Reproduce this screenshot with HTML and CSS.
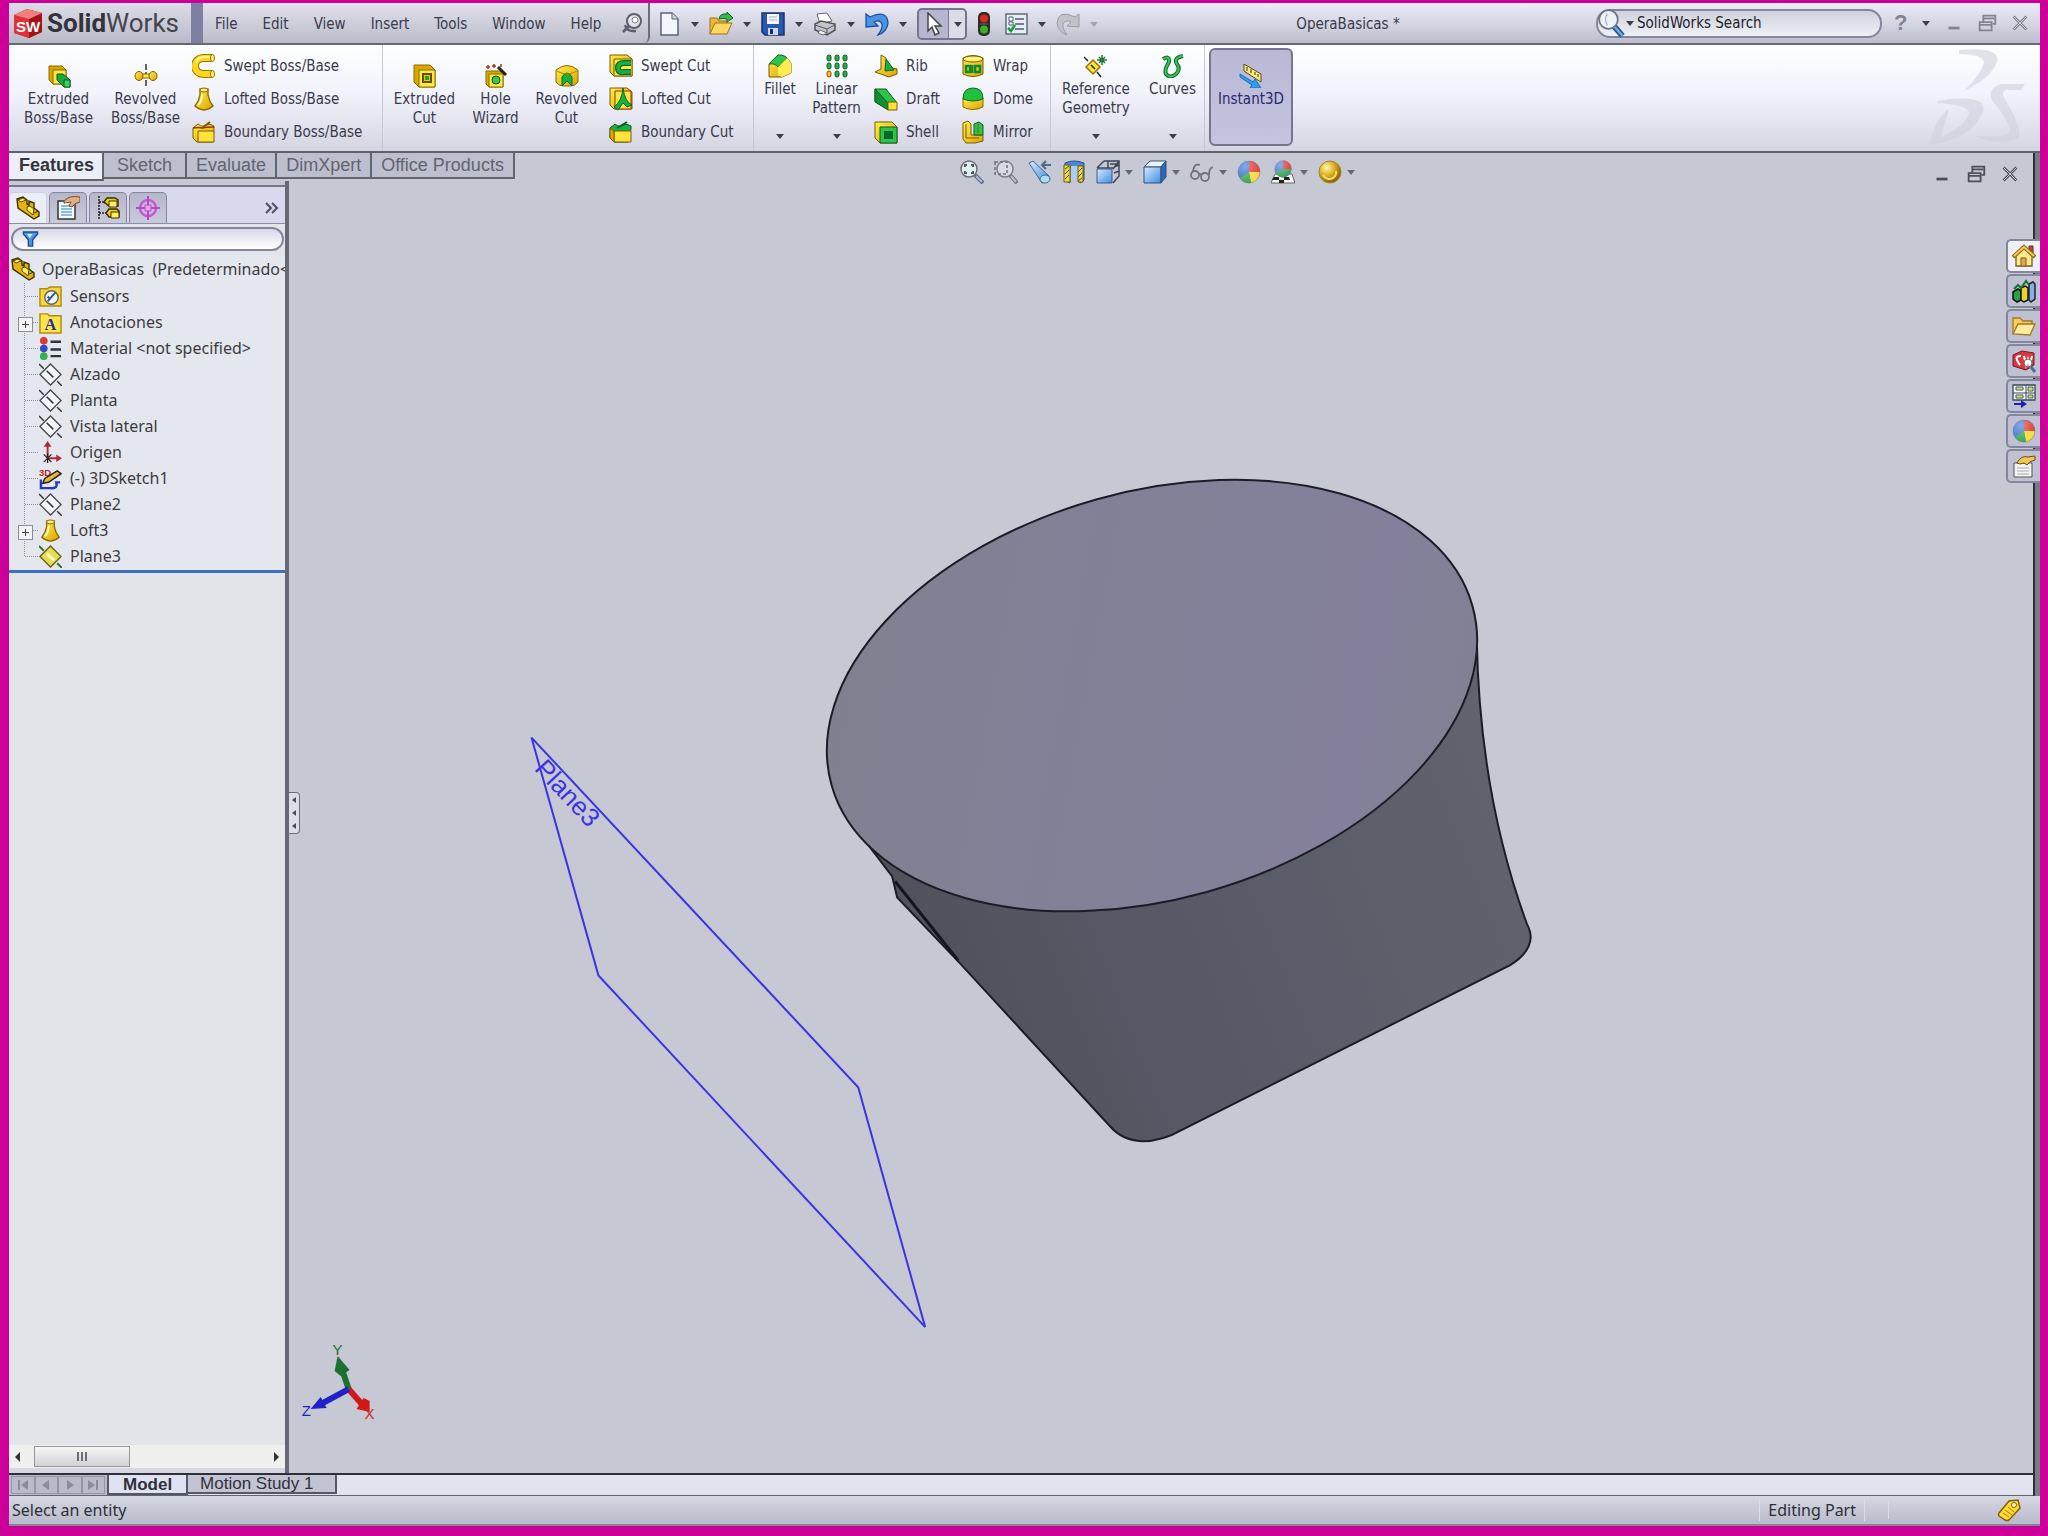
FILE: index.html
```html
<!DOCTYPE html>
<html lang="en">
<head>
    <meta charset="UTF-8">
    <meta name="viewport" content="width=device-width, initial-scale=1.0">
    <title>SolidWorks - OperaBasicas</title>
    <link rel="stylesheet" href="styles.css">
</head>
<body>
    <!-- Icon library -->
    <svg class="defs" aria-hidden="true">
        <defs>
            <linearGradient id="gGold" x1="0" y1="0" x2="1" y2="1"><stop offset="0" stop-color="#fff04a"/><stop offset="1" stop-color="#e0a000"/></linearGradient>
            <linearGradient id="gBlue" x1="0" y1="0" x2="1" y2="1"><stop offset="0" stop-color="#d4eaff"/><stop offset="1" stop-color="#3f8de0"/></linearGradient>
            <radialGradient id="gBall" cx=".35" cy=".3" r=".7"><stop offset="0" stop-color="#fff8b0"/><stop offset=".5" stop-color="#e0b020"/><stop offset="1" stop-color="#8a6200"/></radialGradient>
            <radialGradient id="gShine" cx=".35" cy=".25" r=".8"><stop offset="0" stop-color="#fff" stop-opacity=".4"/><stop offset="1" stop-color="#fff" stop-opacity="0"/></radialGradient>
        </defs>
        <symbol id="i-extrude" viewBox="0 0 24 24"><path d="M2 2h13l4 4v14H6l-4-4z" fill="#d9a400" stroke="#8a6a00"/><path d="M6 6h13v14H6z" fill="#ffe840" stroke="#8a6a00"/><path d="M10 10h6l7 6v7h-6l-7-7z" fill="#19a83c" stroke="#0b5c20"/><path d="M17 16h6v7h-6z" fill="#3fd060" stroke="#0b5c20"/></symbol>
        <symbol id="i-revolve" viewBox="0 0 24 24"><path d="M12 0v24" stroke="#333" stroke-width="1.5" stroke-dasharray="6 2"/><path d="M7 12h10" stroke="#8a6a00" stroke-width="5"/><path d="M7 12h10" stroke="#ffe840" stroke-width="3"/><ellipse cx="5" cy="12" rx="4" ry="4.500" fill="url(#gGold)" stroke="#8a5a00"/><ellipse cx="19" cy="12" rx="4" ry="4.500" fill="url(#gGold)" stroke="#8a5a00"/></symbol>
        <symbol id="i-sweep" viewBox="0 0 24 24"><path d="M21 4H12C0 4 0 20 12 20h9" fill="none" stroke="#9a7400" stroke-width="8"/><path d="M20 4H12C0 4 0 20 12 20h8" fill="none" stroke="#fbd81c" stroke-width="6"/><path d="M19 3h-7Q5 3 4 9" fill="none" stroke="#fff69a" stroke-width="2"/><ellipse cx="20.500" cy="4" rx="2" ry="3.500" fill="#fff27a" stroke="#9a7400"/><ellipse cx="20.500" cy="20" rx="2" ry="3.500" fill="#fff27a" stroke="#9a7400"/></symbol>
        <symbol id="i-loft" viewBox="0 0 24 24"><path d="M8 2h8v6q1 6 5 11-3 3-9 4-6-1-9-4 4-5 5-11z" fill="url(#gGold)" stroke="#8a6a00" stroke-width="1.400"/><ellipse cx="12" cy="3" rx="4" ry="2" fill="#fff27a" stroke="#8a6a00"/><path d="M10 7q0 8-4 11" stroke="#fffbc0" stroke-width="2" fill="none"/></symbol>
        <symbol id="i-boundary" viewBox="0 0 24 24"><path d="M1 8l5-4q5 4 8 1 4-2 8 1v3l-1 13H5l-4-4z" fill="url(#gGold)" stroke="#7a5c00"/><path d="M6 11h16v11H6z" fill="#ffe23a" stroke="#7a5c00"/><path d="M1 8q6-1 9 0 5-1 12-1" fill="none" stroke="#a03000" stroke-width="1.500"/><path d="M10 8l8-6" stroke="#7a5c00" stroke-width="2"/></symbol>
        <symbol id="i-excut" viewBox="0 0 24 24"><path d="M1 1h16l5 5v17H6l-5-5z" fill="#dba800" stroke="#8a6a00"/><path d="M6 6h16v17H6z" fill="#ffe840" stroke="#8a6a00"/><path d="M10 10h8v8h-8z" fill="#f5c400" stroke="#6a4c00" stroke-width="2"/><path d="M12 12h4v4h-4z" fill="#18a838"/></symbol>
        <symbol id="i-hole" viewBox="0 0 24 24"><path d="M2 7h14l3 3v13H5l-3-3z" fill="#dba800" stroke="#8a6a00"/><path d="M5 10h14v13H5z" fill="#ffe840" stroke="#8a6a00"/><circle cx="12" cy="16" r="4" fill="#38c850" stroke="#0b5c20"/><path d="M14 3l8 8" stroke="#222" stroke-width="3"/><path d="M4 1v4M2 3h4M10 0v4M8 2h4M17 0v3" stroke="#a04000" stroke-width="1.500"/></symbol>
        <symbol id="i-revcut" viewBox="0 0 24 24"><path d="M1 6q11-9 22 0v12q-3 4-7 4H8q-4 0-7-4z" fill="url(#gGold)" stroke="#8a6a00"/><path d="M7 22V13q5-8 10 0v9l-5-5z" fill="#18b040" stroke="#0b6c20"/><path d="M2 7q10 6 20 0" stroke="#b08a00" fill="none"/></symbol>
        <symbol id="i-sweptcut" viewBox="0 0 24 24"><path d="M1 1h17l5 4v17H5l-4-4z" fill="url(#gGold)" stroke="#7a5c00"/><path d="M5 5h18v17H5z" fill="#ffe840" stroke="#7a5c00"/><path d="M22 9h-7q-6 0-6 5t6 4h7" fill="none" stroke="#0b6c20" stroke-width="6"/><path d="M22 9h-7q-6 0-6 5t6 4h7" fill="none" stroke="#18b040" stroke-width="3.500"/></symbol>
        <symbol id="i-loftcut" viewBox="0 0 24 24"><path d="M1 1h17l5 4v17H5l-4-4z" fill="url(#gGold)" stroke="#7a5c00"/><path d="M6 4h16v18H6z" fill="#ffe840" stroke="#a03000"/><path d="M14 1q2 14 9 17l-5 2-4-4-5 7-4-3q8-6 9-19z" fill="#18b040" stroke="#0b6c20"/></symbol>
        <symbol id="i-boundcut" viewBox="0 0 24 24"><path d="M1 8l5-4q5 4 8 1 4-2 8 1v3l-3 13H5l-4-4z" fill="#18b040" stroke="#0b5c20"/><path d="M5 11h17v11H5z" fill="#ffe23a" stroke="#7a5c00"/><path d="M1 8l4 3v11l-4-4z" fill="#e0a800" stroke="#7a5c00"/><path d="M8 8l10-6" stroke="#0b5c20" stroke-width="2"/></symbol>
        <symbol id="i-fillet" viewBox="0 0 24 24"><path d="M1 10L10 1l8 2 5 6v10l-9 4H1z" fill="url(#gGold)" stroke="#7a5c00"/><path d="M1 10L10 1q7 0 9 3l-9 9q-3-4-9-3z" fill="#2cc44c" stroke="#0b6c20"/><path d="M10 13l9-9 4 5v10l-9 4-4-2z" fill="#ffec50"/></symbol>
        <symbol id="i-pattern" viewBox="0 0 24 24"><g fill="#28b048" stroke="#0b5c20"><rect x="2" y="1" width="4" height="6" rx="2"/><rect x="10" y="1" width="4" height="6" rx="2"/><rect x="18" y="1" width="4" height="6" rx="2"/><rect x="2" y="9" width="4" height="6" rx="2"/><rect x="10" y="9" width="4" height="6" rx="2"/><rect x="18" y="9" width="4" height="6" rx="2"/><rect x="10" y="17" width="4" height="6" rx="2"/><rect x="18" y="17" width="4" height="6" rx="2"/></g><rect x="2" y="17" width="4" height="6" rx="2" fill="#ffc020" stroke="#a04000"/></symbol>
        <symbol id="i-rib" viewBox="0 0 24 24"><path d="M7 1l5 3v9l11 2v5l-8 3L1 18l6-3z" fill="url(#gGold)" stroke="#7a5c00"/><path d="M12 5l8 11-9 1z" fill="#18b040" stroke="#0b6c20"/></symbol>
        <symbol id="i-draft" viewBox="0 0 24 24"><path d="M1 2h11l11 14H11L1 14z" fill="#2cc44c" stroke="#0b5c20"/><path d="M1 2l13 14v7L1 15z" fill="#109030" stroke="#0b5c20"/><path d="M14 15h9v8h-9z" fill="#ffe23a" stroke="#7a5c00"/></symbol>
        <symbol id="i-shell" viewBox="0 0 24 24"><path d="M1 2h17l5 5v16H6l-5-5z" fill="url(#gGold)" stroke="#7a5c00"/><path d="M6 7h17v16H6z" fill="#2cc44c" stroke="#0b5c20"/><path d="M10 11h9v8h-9z" fill="#08682a"/></symbol>
        <symbol id="i-wrap" viewBox="0 0 24 24"><path d="M2 4q10-5 20 0v16q-10 5-20 0z" fill="url(#gGold)" stroke="#7a5c00"/><ellipse cx="12" cy="5" rx="10" ry="3" fill="#fff27a" stroke="#7a5c00"/><path d="M9 12H5v6h4zM11 11v8M14 12h5v6h-5z" fill="none" stroke="#0b8c30" stroke-width="2.500"/></symbol>
        <symbol id="i-dome" viewBox="0 0 24 24"><path d="M2 11h20v9q-10 5-20 0z" fill="url(#gGold)" stroke="#8a6a00"/><path d="M2 12Q2 1 12 1t10 11q-10 4-20 0z" fill="#20c040" stroke="#0b6c20"/></symbol>
        <symbol id="i-mirror" viewBox="0 0 24 24"><path d="M2 3l5-2 3 3v11h12v6l-8 2H5l-3-4z" fill="url(#gGold)" stroke="#7a5c00"/><path d="M13 4l5-2 4 3v10h-9z" fill="#2cc44c" stroke="#0b5c20"/><path d="M17 4v9M5 4v14h13" stroke="#7a5c00" fill="none"/></symbol>
        <symbol id="i-refgeo" viewBox="0 0 24 24"><path d="M2 13l7-7 7 7-7 7z" fill="#ffe23a" stroke="#9a7400" stroke-width="1.500"/><path d="M0 3l4 4M13 18l4 5M7 11l4 4" stroke="#222" stroke-width="1.500"/><path d="M18 1v10M13 6h10M15 3l6 6M21 3l-6 6" stroke="#1a7c30" stroke-width="1.500"/></symbol>
        <symbol id="i-curves" viewBox="0 0 24 24"><path d="M2 5q7-4 6 3-5 8-3 12 4 5 10 0 5-5 1-10-4-6 6-8" fill="none" stroke="#0b6c20" stroke-width="4"/><path d="M2 5q7-4 6 3-5 8-3 12 4 5 10 0 5-5 1-10-4-6 6-8" fill="none" stroke="#3cc05c" stroke-width="2"/></symbol>
        <symbol id="i-instant" viewBox="0 0 24 24"><path d="M5 0l17 10v8L5 7z" fill="#ffe878" stroke="#5a4c10"/><path d="M8 3v4M12 5v4M16 8v3M19 10v3" stroke="#333"/><path d="M1 10l13 8 2-3 6 9H11l2-3L1 13z" fill="#2f9cf0" stroke="#1870c0"/></symbol>

        <symbol id="i-new" viewBox="0 0 24 24"><path d="M4 1h11l6 6v16H4z" fill="#f4f8fd" stroke="#5a6478" stroke-width="1.500"/><path d="M15 1v6h6" fill="#cfd8e8" stroke="#5a6478"/></symbol>
        <symbol id="i-open" viewBox="0 0 24 24"><path d="M1 22V6h7l2 3h8v4" fill="#e8b838" stroke="#a07010"/><path d="M1 22L6 11h17l-5 11z" fill="#ffd868" stroke="#a07010"/><path d="M10 7q1-6 8-5l0-2 6 6-6 4v-3q-4-1-8 0z" fill="#38b848" stroke="#0b6c20"/></symbol>
        <symbol id="i-save" viewBox="0 0 24 24"><path d="M1 1h22v22H4l-3-3z" fill="#2858b0" stroke="#18306c" stroke-width="1.500"/><path d="M6 2h12v10H6z" fill="#f4f8ff"/><path d="M8 5h8M8 8h8" stroke="#a0b0c8"/><path d="M7 16h10v7H7z" fill="#d0d8e8"/><path d="M9 17h3v5H9z" fill="#18306c"/></symbol>
        <symbol id="i-print" viewBox="0 0 24 24"><path d="M4 2l10-1 5 8-12 3z" fill="#fff" stroke="#68686e"/><path d="M2 12l6-3 14 3v6l-8 5-12-5z" fill="#c4c6cc" stroke="#50525a" stroke-width="1.500"/><path d="M2 13l12 4 8-4M14 17v6" stroke="#50525a" fill="none"/><path d="M7 18l7 3-4 2-5-2z" fill="#fff" stroke="#68686e"/></symbol>
        <symbol id="i-undo" viewBox="0 0 24 24"><path d="M1 2l4 3q17-8 18 6-1 9-10 12 5-7 4-11-2-5-8-2l4 4L1 15z" fill="#4a94e8" stroke="#1a4fa0" stroke-width="1.300"/></symbol>
        <symbol id="i-redo" viewBox="0 0 24 24"><path d="M23 2l-4 3Q2-3 1 11q1 9 10 12-5-7-4-11 2-5 8-2l-4 4 12 1z" fill="#c0c2cc" stroke="#9a9ca8"/></symbol>
        <symbol id="i-cursor" viewBox="0 0 24 24"><path d="M7 1v18l4-4 3 8 4-2-4-7h6z" fill="#fff" stroke="#444" stroke-width="1.500"/></symbol>
        <symbol id="i-light" viewBox="0 0 24 24"><rect x="6" y="0" width="12" height="24" rx="5" fill="#2c2c2c"/><circle cx="12" cy="6.500" r="4" fill="#e02818"/><circle cx="12" cy="17.500" r="4" fill="#38b028"/><path d="M8 12h8" stroke="#666"/></symbol>
        <symbol id="i-options" viewBox="0 0 24 24"><path d="M2 2h21v20H2z" fill="#e8eef4" stroke="#5c6c80" stroke-width="1.500"/><path d="M11 7h9M11 12h9M11 17h9" stroke="#4c5c70" stroke-width="1.500"/><path d="M5 5h4v4H5zM5 10h4v3H5z" fill="#fff" stroke="#4c5c70"/><path d="M4 16l3 3 4-6" stroke="#18a038" stroke-width="2.500" fill="none"/></symbol>
        <symbol id="i-pin" viewBox="0 0 24 24"><circle cx="14" cy="9" r="7" fill="#e4e5ec" stroke="#5c5e6a" stroke-width="2"/><circle cx="15" cy="8" r="3" fill="#fff" stroke="#80828c"/><path d="M9 14l-6 6M5 13q2 7 11 6" stroke="#5c5e6a" stroke-width="2.500" fill="none"/></symbol>
        <symbol id="i-search" viewBox="0 0 24 24"><path d="M14 15l7 8" stroke="#28588c" stroke-width="5"/><path d="M14 15l7 8" stroke="#6cb0e8" stroke-width="2"/><circle cx="9" cy="9" r="8" fill="#f0f8ff" fill-opacity=".8" stroke="#6c7484" stroke-width="1.500"/><path d="M8 4q-3 5 0 10" stroke="#a0acbc" fill="none"/></symbol>
        <symbol id="i-min" viewBox="0 0 24 24"><path d="M6 16h12v3H6z" fill="currentColor"/></symbol>
        <symbol id="i-restore" viewBox="0 0 24 24"><path d="M8 11V4h13v9h-3" fill="none" stroke="currentColor" stroke-width="2"/><path d="M8 7h12" stroke="currentColor" stroke-width="2"/><path d="M4 11h13v9H4zM4 14h13" fill="none" stroke="currentColor" stroke-width="2"/></symbol>
        <symbol id="i-close" viewBox="0 0 24 24"><path d="M5 5l14 14M19 5L5 19" stroke="currentColor" stroke-width="3"/><path d="M5 5l14 14M19 5L5 19" stroke="#d4d5dc" stroke-width="1"/></symbol>

        <symbol id="i-zoomfit" viewBox="0 0 24 24"><path d="M15 15l8 8" stroke="#5a6478" stroke-width="4"/><path d="M16 16l6 6" stroke="#a8c0e8" stroke-width="2"/><circle cx="9" cy="9" r="8" fill="#e4eaf2" stroke="#6c6f7a" stroke-width="1.500"/><path d="M5 7V5h2M11 5h2v2M13 11v2h-2M7 13H5v-2" fill="none" stroke="#3a6a4a" stroke-width="2"/></symbol>
        <symbol id="i-zoomarea" viewBox="0 0 24 24"><path d="M16 15l7 8" stroke="#6a6e7c" stroke-width="4"/><path d="M17 16l5 6" stroke="#b8bccc" stroke-width="2"/><circle cx="11" cy="9" r="8" fill="#d8dae4" stroke="#7c7f8a" stroke-width="1.500"/><path d="M1 2h12v12H1z" fill="none" stroke="#6c6f7a" stroke-width="1.500" stroke-dasharray="3 2"/></symbol>
        <symbol id="i-prev" viewBox="0 0 24 24"><path d="M1 3l4-2 16 15q1 6-7 7z" fill="url(#gBlue)" stroke="#44688c"/><ellipse cx="17" cy="19" rx="5" ry="4" fill="#a8dcf8" stroke="#3a6890"/><path d="M23 5h-8M18 1l-4 4 4 4" fill="none" stroke="#50688c" stroke-width="2"/></symbol>
        <symbol id="i-section" viewBox="0 0 24 24"><path d="M3 3q9-4 19 0v17l-4 3V7H8v16l-5-3z" fill="#4a88d8" stroke="#2c4c80"/><path d="M9 6h7v13H9z" fill="#a8ccf4"/><path d="M2 5h6v17H2zM16 6h5v16h-5z" fill="#f0d838" stroke="#6a5c10"/><path d="M3 9l4-3M3 14l4-4M3 19l4-4M16 12l4-4M16 17l4-4M16 21l4-3" stroke="#5a4c10"/></symbol>
        <symbol id="i-views" viewBox="0 0 24 24"><path d="M8 1h15v15l-6 7M8 1L1 8M23 1l-6 8M12 1v7M1 8h16M18 7l5-2M18 13l5-2M14 4h8" fill="none" stroke="#3c4658" stroke-width="1.500"/><path d="M1 9h15v14H1z" fill="url(#gBlue)" stroke="#3c5c88"/></symbol>
        <symbol id="i-display" viewBox="0 0 24 24"><path d="M1 7l6-6h16l-5 6z" fill="#e8f4ff" stroke="#34527c"/><path d="M1 7h17v16H1z" fill="url(#gBlue)" stroke="#34527c"/><path d="M18 7l5-6v16l-5 6z" fill="#2c68b8" stroke="#34527c"/></symbol>
        <symbol id="i-hide" viewBox="0 0 24 24"><g fill="none" stroke="#70737e" stroke-width="1.800"><circle cx="5" cy="15" r="4"/><circle cx="15" cy="17" r="4"/><path d="M9 14q1-1 2 1M3 11q1-8 7-6M19 15q0-7 4-8"/></g></symbol>
        <symbol id="i-appear" viewBox="0 0 24 24"><circle cx="12" cy="12" r="11" fill="#3470d4"/><path d="M12 1a11 11 0 0 1 11 11H12z" fill="#e03428"/><path d="M23 12a11 11 0 0 1-9 11l-2-11z" fill="#f8d838"/><path d="M14 23A11 11 0 0 1 3 18l9-6z" fill="#38a848"/><circle cx="12" cy="12" r="11" fill="url(#gShine)" stroke="#78808c" stroke-width=".5"/></symbol>
        <symbol id="i-scene" viewBox="0 0 24 24"><path d="M4 14h17l3 9H0z" fill="#f4f4f0" stroke="#666"/><path d="M3 17h5v3H1zM13 17h5l1 3h-6zM8 20h5v3H8z" fill="#222"/><circle cx="12" cy="9" r="8.500" fill="#3c78d8"/><path d="M12 .5a8.500 8.500 0 0 1 8.500 8.500H12z" fill="#e03428"/><path d="M4 12q3 5 8 5.500 7-1 8.500-8.500H12z" fill="#38a058"/><circle cx="12" cy="9" r="8.500" fill="url(#gShine)"/></symbol>
        <symbol id="i-gold" viewBox="0 0 24 24"><circle cx="12" cy="12" r="11" fill="url(#gBall)" stroke="#a8842c"/><path d="M5 15q4 6 10 3 4-3 3-7" stroke="#f8dc70" stroke-width="2" fill="none"/></symbol>

        <symbol id="i-part" viewBox="0 0 24 24"><path d="M1 3l6-2 4 3v4l2 1V5l5 2v5l5 4v4l-5 3L2 12z" fill="#e4b410" stroke="#3c3000" stroke-width="1.400"/><path d="M2 4l5-2 3 2-5 2zM11 11l3-1 4 3-1 6-6-5z" fill="#fff060" stroke="#5a4800"/><path d="M18 17l5-2" stroke="#3c3000"/></symbol>
        <symbol id="i-props" viewBox="0 0 24 24"><path d="M2 5h17v18H2z" fill="#f4faff" stroke="#333" stroke-width="1.500"/><path d="M5 10h11M5 13h11M5 16h11M5 19h11" stroke="#68a8d8" stroke-width="1.500"/><path d="M8 5q5-6 16-4v5q-6 1-8 5l-3-1 2-4-7 1z" fill="#e0b080" stroke="#7a4c28"/></symbol>
        <symbol id="i-config" viewBox="0 0 24 24"><path d="M3 0v24M3 6h7M3 17h7" stroke="#222" stroke-width="1.500" stroke-dasharray="2 1"/><path d="M8 6l3-4h8l3 2v6h-9zM10 17l3-4h8l2 2v6H13z" fill="#f0cc20" stroke="#3c3000" stroke-width="1.500"/><path d="M13 5h8v6h-8zM15 16h8v6h-8z" fill="#fff060" stroke="#3c3000"/></symbol>
        <symbol id="i-target" viewBox="0 0 24 24"><circle cx="12" cy="12" r="8" fill="none" stroke="#c858d8" stroke-width="2.500"/><path d="M12 0v24M0 12h24" stroke="#b848c8" stroke-width="2"/><path d="M9 9h6v6H9z" fill="#e8a0f0" stroke="#b848c8"/></symbol>
        <symbol id="i-filter" viewBox="0 0 24 24"><path d="M2 2h20v3l-7 8v9H9v-9L2 5z" fill="#4c98e4" stroke="#1a4c98" stroke-width="2"/><path d="M7 5h8l-4 6z" fill="#d0ecff"/></symbol>
        <symbol id="i-sensor" viewBox="0 0 24 24"><path d="M1 4h8l2-2h12v20H1z" fill="#f8d838" stroke="#b08c10" stroke-width="1.500"/><circle cx="13" cy="13" r="7" fill="#f4f6fa" stroke="#5c6470" stroke-width="1.500"/><path d="M9 17l8-9M9 12l3 3" stroke="#28588c" stroke-width="2"/></symbol>
        <symbol id="i-material" viewBox="0 0 24 24"><circle cx="5" cy="4" r="4" fill="#e03838"/><circle cx="5" cy="12" r="4" fill="#3448c8"/><circle cx="5" cy="20" r="4" fill="#30b050"/><path d="M12 5h11M12 13h11M12 20h11" stroke="#333" stroke-width="2.500"/></symbol>
        <symbol id="i-plane" viewBox="0 0 24 24"><path d="M1 12L12 1l11 11-11 11z" fill="#f4f5fa" stroke="#444" stroke-width="1.300"/><path d="M0 1l5 5M19 19l5 5M8 8l7 7" stroke="#333" stroke-width="1.500"/></symbol>
        <symbol id="i-plane3" viewBox="0 0 24 24"><path d="M1 12L12 1l11 11-11 11z" fill="#e8dc50" stroke="#6a6418" stroke-width="1.500"/><path d="M8 9l8 7" stroke="#fffcc0" stroke-width="3"/><path d="M0 1l5 5M19 19l5 5" stroke="#2c6c30" stroke-width="2"/></symbol>
        <symbol id="i-origin" viewBox="0 0 24 24"><path d="M9 17V4M9 18h11" stroke="#b02838" stroke-width="2"/><path d="M9 0l4 6H5zM24 18l-6-4v8z" fill="#b02838"/><path d="M5 14l8 8M13 14l-8 8M9 13v10" stroke="#222" stroke-width="1.300"/></symbol>

        <symbol id="i-home" viewBox="0 0 24 24"><path d="M4 12v10h16V12l-8-8z" fill="#ffe890" stroke="#7a5c20" stroke-width="1.300"/><path d="M17 2h4v7l-4-4z" fill="#c04830" stroke="#6a3020"/><path d="M1 13L12 3l11 10" fill="none" stroke="#8a6a20" stroke-width="4"/><path d="M2 12L12 3l10 9" fill="none" stroke="#f8cc50" stroke-width="2"/><path d="M9 14h5v8H9z" fill="#e8a848" stroke="#7a5c20"/></symbol>
        <symbol id="i-library" viewBox="0 0 24 24"><path d="M1 13l5-3 3 2v9l-4 2-4-3z" fill="#28a048" stroke="#111" stroke-width="1.500"/><path d="M9 9l4-2 3 2v12l-4 2-3-2z" fill="#f0d030" stroke="#111" stroke-width="1.500"/><path d="M17 5l4-2 2 2v15l-4 3-2-2z" fill="#88acec" stroke="#222" stroke-width="1.500"/><path d="M2 10l4-4 3 3 5-7 3 4" fill="none" stroke="#187030" stroke-width="2"/></symbol>
        <symbol id="i-folder" viewBox="0 0 24 24"><path d="M1 20V4h7l3 3h9v4" fill="#f4cc60" stroke="#a07820" stroke-width="1.300"/><path d="M1 20l5-10h17l-5 11z" fill="#ffeca0" stroke="#a07820" stroke-width="1.300"/></symbol>
        <symbol id="i-swfind" viewBox="0 0 24 24"><path d="M1 6l9-4 12 2v12l-8 5-13-4z" fill="#d83840" stroke="#7a1820"/><path d="M9 7q-6 0-4 4t3 5M12 7l2 9 2-6 2 6 2-9" fill="none" stroke="#fff" stroke-width="2"/><circle cx="16" cy="14" r="4" fill="#fff" fill-opacity=".6" stroke="#666"/><path d="M19 18l4 5" stroke="#4870a0" stroke-width="3"/></symbol>
        <symbol id="i-palette" viewBox="0 0 24 24"><path d="M1 1h22v15H1z" fill="#f4f8f4" stroke="#38485c" stroke-width="1.300"/><path d="M14 1v15M1 9h22" stroke="#38485c"/><path d="M4 3h7v3H4zM16 3h5v4h-5zM4 11h7v3H4zM16 11h5v3h-5z" fill="#d8dc60" stroke="#486078"/><path d="M2 19h7v-3l6 4-6 4v-3H2z" fill="#1820c0"/></symbol>
        <symbol id="i-custom" viewBox="0 0 24 24"><path d="M2 9h18v14H2z" fill="#f4f4f4" stroke="#555"/><path d="M5 14h12M5 17h12M5 20h12" stroke="#aaa"/><path d="M5 9q4-8 11-6l7-1v4q-6 1-8 5l-3-2-4 1z" fill="#f0c850" stroke="#6a4c18"/></symbol>
        <symbol id="i-tag" viewBox="0 0 24 24"><path d="M2 15L12 3l9-1 2 8-11 12q-2 1-4 0l-6-4q-1-1 0-3z" fill="#ffd830" stroke="#806010" stroke-width="1.500"/><circle cx="17" cy="7" r="2.500" fill="#fff8c0" stroke="#806010"/><path d="M8 12l7 5M11 9l6 5M6 15l6 4" stroke="#a88010"/></symbol>
    </svg>

    <!-- Title bar -->
    <header class="titlebar">
        <div class="brand">
            <svg class="cube" viewBox="0 0 30 30" aria-hidden="true"><path d="M1 7L14 1l15 4v19l-13 6L1 25z" fill="#b81420"/><path d="M1 7l15 4v19L1 25z" fill="#e03038"/><path d="M16 11l13-6v19l-13 6z" fill="#a81018"/><path d="M1 7L14 1l15 4-13 6z" fill="#f08080"/><text x="15" y="24" text-anchor="middle" class="cube-text">SW</text></svg>
            <span class="brand-name"><b>Solid</b>Works</span>
        </div>
        <nav class="menu">
            <button>File</button>
            <button>Edit</button>
            <button>View</button>
            <button>Insert</button>
            <button>Tools</button>
            <button>Window</button>
            <button>Help</button>
            <button class="pin" aria-label="Pin menu"><svg class="icon"><use href="#i-pin"/></svg></button>
        </nav>
        <div class="quick">
            <button class="drop" aria-label="New"><svg class="icon"><use href="#i-new"/></svg><i class="caret"></i></button>
            <button class="drop" aria-label="Open"><svg class="icon"><use href="#i-open"/></svg><i class="caret"></i></button>
            <button class="drop" aria-label="Save"><svg class="icon"><use href="#i-save"/></svg><i class="caret"></i></button>
            <button class="drop" aria-label="Print"><svg class="icon"><use href="#i-print"/></svg><i class="caret"></i></button>
            <button class="drop" aria-label="Undo"><svg class="icon"><use href="#i-undo"/></svg><i class="caret"></i></button>
            <button class="select-tool" aria-label="Select"><svg class="icon"><use href="#i-cursor"/></svg><i class="caret"></i></button>
            <button class="rebuild" aria-label="Rebuild"><svg class="icon"><use href="#i-light"/></svg></button>
            <button class="drop" aria-label="Options"><svg class="icon"><use href="#i-options"/></svg><i class="caret"></i></button>
            <button class="drop off" aria-label="Redo"><svg class="icon"><use href="#i-redo"/></svg><i class="caret"></i></button>
        </div>
        <div class="doc-title">OperaBasicas *</div>
        <label class="search">
            <svg class="lens"><use href="#i-search"/></svg>
            <i class="caret"></i>
            <input type="text" placeholder="SolidWorks Search" aria-label="SolidWorks Search">
        </label>
        <div class="window-controls">
            <button class="help" aria-label="Help">?<i class="caret"></i></button>
            <button aria-label="Minimize"><svg class="glyph"><use href="#i-min"/></svg></button>
            <button aria-label="Restore"><svg class="glyph"><use href="#i-restore"/></svg></button>
            <button aria-label="Close"><svg class="glyph"><use href="#i-close"/></svg></button>
        </div>
    </header>

    <!-- Ribbon -->
    <section class="ribbon">
        <div class="group">
            <button class="big w-boss"><svg class="icon"><use href="#i-extrude"/></svg>Extruded<br>Boss/Base</button>
            <button class="big w-boss"><svg class="icon"><use href="#i-revolve"/></svg>Revolved<br>Boss/Base</button>
            <div class="stack boss-stack">
                <button><svg class="icon"><use href="#i-sweep"/></svg>Swept Boss/Base</button>
                <button><svg class="icon"><use href="#i-loft"/></svg>Lofted Boss/Base</button>
                <button><svg class="icon"><use href="#i-boundary"/></svg>Boundary Boss/Base</button>
            </div>
        </div>
        <div class="group">
            <button class="big w-cut"><svg class="icon"><use href="#i-excut"/></svg>Extruded<br>Cut</button>
            <button class="big w-cut"><svg class="icon"><use href="#i-hole"/></svg>Hole<br>Wizard</button>
            <button class="big w-cut"><svg class="icon"><use href="#i-revcut"/></svg>Revolved<br>Cut</button>
            <div class="stack cut-stack">
                <button><svg class="icon"><use href="#i-sweptcut"/></svg>Swept Cut</button>
                <button><svg class="icon"><use href="#i-loftcut"/></svg>Lofted Cut</button>
                <button><svg class="icon"><use href="#i-boundcut"/></svg>Boundary Cut</button>
            </div>
        </div>
        <div class="group tight">
            <button class="big menu-btn w-fillet"><svg class="icon"><use href="#i-fillet"/></svg>Fillet<i class="caret"></i></button>
            <button class="big menu-btn w-linear"><svg class="icon"><use href="#i-pattern"/></svg>Linear<br>Pattern<i class="caret"></i></button>
            <div class="stack rib-stack">
                <button><svg class="icon"><use href="#i-rib"/></svg>Rib</button>
                <button><svg class="icon"><use href="#i-draft"/></svg>Draft</button>
                <button><svg class="icon"><use href="#i-shell"/></svg>Shell</button>
            </div>
            <div class="stack wrap-stack">
                <button><svg class="icon"><use href="#i-wrap"/></svg>Wrap</button>
                <button><svg class="icon"><use href="#i-dome"/></svg>Dome</button>
                <button><svg class="icon"><use href="#i-mirror"/></svg>Mirror</button>
            </div>
        </div>
        <div class="group tight">
            <button class="big menu-btn w-ref"><svg class="icon"><use href="#i-refgeo"/></svg>Reference<br>Geometry<i class="caret"></i></button>
            <button class="big menu-btn w-curves"><svg class="icon"><use href="#i-curves"/></svg>Curves<i class="caret"></i></button>
        </div>
        <button class="big pressed"><svg class="icon"><use href="#i-instant"/></svg>Instant3D</button>
        <svg class="watermark" viewBox="0 0 100 100" aria-hidden="true"><path d="M32 3q42-4 38 12-6 16-33 29 18-18 20-29-2-8-25-8z"/><path d="M98 37H74q-14 4-9 16 18 22 18 32-6 6-34 4 18 10 42 3 6-8-13-40-4-6 0-9h16z"/><path d="M10 54q50-8 46 10-10 28-54 34 6-26 20-36-6 18-8 28 24-10 28-24 0-8-32-10z"/></svg>
    </section>

    <!-- Workspace -->
    <main class="workspace">
        <div class="side">
            <div class="cmd-tabs">
                <button class="active">Features</button>
                <button>Sketch</button>
                <button>Evaluate</button>
                <button>DimXpert</button>
                <button>Office Products</button>
            </div>
            <aside class="panel">
                <div class="panel-tabs">
                    <button class="active" aria-label="Feature tree"><svg class="icon"><use href="#i-part"/></svg></button>
                    <button aria-label="Properties"><svg class="icon"><use href="#i-props"/></svg></button>
                    <button aria-label="Configurations"><svg class="icon"><use href="#i-config"/></svg></button>
                    <button aria-label="DimXpert"><svg class="icon"><use href="#i-target"/></svg></button>
                    <button class="more" aria-label="More"><svg viewBox="0 0 14 12"><path d="M1 1l5 5-5 5M7 1l5 5-5 5"/></svg></button>
                </div>
                <label class="filter"><svg><use href="#i-filter"/></svg><input type="text" aria-label="Filter"></label>
                <div class="root"><svg class="icon"><use href="#i-part"/></svg><span>OperaBasicas&nbsp; (Predeterminado&lt;&lt;Default&gt;)</span></div>
                <ul class="tree">
                    <li><svg class="icon"><use href="#i-sensor"/></svg>Sensors</li>
                    <li class="closed"><svg class="icon" viewBox="0 0 24 24"><path d="M1 3h8l2 2h12v18H1z" fill="#ffe448" stroke="#b08c10" stroke-width="1.500"/><text x="12" y="20" text-anchor="middle" class="icon-serif">A</text></svg>Anotaciones</li>
                    <li><svg class="icon"><use href="#i-material"/></svg>Material &lt;not specified&gt;</li>
                    <li><svg class="icon"><use href="#i-plane"/></svg>Alzado</li>
                    <li><svg class="icon"><use href="#i-plane"/></svg>Planta</li>
                    <li><svg class="icon"><use href="#i-plane"/></svg>Vista lateral</li>
                    <li><svg class="icon"><use href="#i-origin"/></svg>Origen</li>
                    <li><svg class="icon" viewBox="0 0 24 24"><text x="0" y="9" class="icon-sans">3D</text><path d="M2 13v9h11M12 22q8 1 6-6h4" fill="none" stroke="#2438c0" stroke-width="2.500"/><path d="M4 17l2-5L19 4l4 3-13 9z" fill="#e8b838" stroke="#222" stroke-width="1.500"/></svg>(-) 3DSketch1</li>
                    <li><svg class="icon"><use href="#i-plane"/></svg>Plane2</li>
                    <li class="closed"><svg class="icon"><use href="#i-loft"/></svg>Loft3</li>
                    <li><svg class="icon"><use href="#i-plane3"/></svg>Plane3</li>
                </ul>
                <div class="rollback"></div>
                <div class="scrollbar">
                    <button class="left" aria-label="Scroll left"></button>
                    <div class="thumb"><i></i><i></i><i></i></div>
                    <button class="right" aria-label="Scroll right"></button>
                </div>
            </aside>
        </div>

        <section class="viewport">
            <svg class="scene" viewBox="289 153 1744 1321">
                <defs>
                    <linearGradient id="gFace" x1="0" y1=".3" x2="1" y2=".6"><stop offset="0" stop-color="#7f818f"/><stop offset=".4" stop-color="#828097"/><stop offset=".85" stop-color="#84809b"/><stop offset="1" stop-color="#7f8292"/></linearGradient>
                    <linearGradient id="gBody" x1="0" y1=".6" x2="1" y2=".3"><stop offset="0" stop-color="#504f59"/><stop offset=".35" stop-color="#565865"/><stop offset="1" stop-color="#61646f"/></linearGradient>
                </defs>
                <path class="edge" fill="url(#gBody)" d="M863 839L892 877 897 898 958 962 1110 1127Q1122 1141 1142 1142 1162 1142 1183 1130L1510 966Q1530 954 1531 938 1531 932 1527 924C1500 850 1479 760 1477 639z"/>
                <path class="seam" d="M895 882L958 961"/>
                <ellipse class="edge" fill="url(#gFace)" cx="1152" cy="696" rx="333" ry="204" transform="rotate(-15.600 1152 696)"/>
                <path class="plane" d="M531 738L858 1088 925 1328 598 976z"/>
                <text class="plane-label" transform="translate(533 770) rotate(47)">Plane3</text>
                <g class="triad">
                    <path d="M348 1390L341 1369" stroke="#1c7030"/><path d="M337 1357l-3 15 6 5 9-6z" fill="#1c7030"/>
                    <path d="M348 1390L362 1406" stroke="#d01818"/><path d="M369 1413l-13-3 7-11 6 3z" fill="#d01818"/>
                    <path d="M348 1390L322 1404" stroke="#2020c8"/><path d="M310 1410l10-12 6 11z" fill="#2020c8"/>
                    <text x="332" y="1356" fill="#1c7030">Y</text><text x="364" y="1420" fill="#d02828">X</text><text x="301" y="1417" fill="#2020c8">Z</text>
                </g>
            </svg>
            <div class="hud">
                <button aria-label="Zoom to fit"><svg class="icon"><use href="#i-zoomfit"/></svg></button>
                <button aria-label="Zoom to area"><svg class="icon"><use href="#i-zoomarea"/></svg></button>
                <button aria-label="Previous view"><svg class="icon"><use href="#i-prev"/></svg></button>
                <button aria-label="Section view"><svg class="icon"><use href="#i-section"/></svg></button>
                <button aria-label="View orientation"><svg class="icon"><use href="#i-views"/></svg><i class="caret"></i></button>
                <button aria-label="Display style"><svg class="icon"><use href="#i-display"/></svg><i class="caret"></i></button>
                <button aria-label="Hide items"><svg class="icon"><use href="#i-hide"/></svg><i class="caret"></i></button>
                <button aria-label="Edit appearance"><svg class="icon"><use href="#i-appear"/></svg></button>
                <button aria-label="Apply scene"><svg class="icon"><use href="#i-scene"/></svg><i class="caret"></i></button>
                <button aria-label="View settings"><svg class="icon"><use href="#i-gold"/></svg><i class="caret"></i></button>
            </div>
            <div class="doc-controls">
                <button aria-label="Minimize document"><svg class="glyph"><use href="#i-min"/></svg></button>
                <button aria-label="Restore document"><svg class="glyph"><use href="#i-restore"/></svg></button>
                <button aria-label="Close document"><svg class="glyph"><use href="#i-close"/></svg></button>
            </div>
            <button class="splitter" aria-label="Collapse panel"><i></i><i></i><i></i></button>
        </section>

        <div class="strip">
            <div class="task-pane">
                <button class="active" aria-label="Resources"><svg class="icon"><use href="#i-home"/></svg></button>
                <button aria-label="Design library"><svg class="icon"><use href="#i-library"/></svg></button>
                <button aria-label="File explorer"><svg class="icon"><use href="#i-folder"/></svg></button>
                <button aria-label="Search results"><svg class="icon"><use href="#i-swfind"/></svg></button>
                <button aria-label="View palette"><svg class="icon"><use href="#i-palette"/></svg></button>
                <button aria-label="Appearances"><svg class="icon"><use href="#i-appear"/></svg></button>
                <button aria-label="Custom properties"><svg class="icon"><use href="#i-custom"/></svg></button>
            </div>
        </div>

        <div class="sheet-tabs">
            <div class="pager">
                <button disabled aria-label="First"><svg viewBox="0 0 12 12"><path d="M1 1v10h2V1zM11 1v10L4 6z"/></svg></button>
                <button disabled aria-label="Previous"><svg viewBox="0 0 12 12"><path d="M9 1v10L2 6z"/></svg></button>
                <button disabled aria-label="Next"><svg viewBox="0 0 12 12"><path d="M3 1v10l7-5z"/></svg></button>
                <button disabled aria-label="Last"><svg viewBox="0 0 12 12"><path d="M1 1v10l7-5zM9 1v10h2V1z"/></svg></button>
            </div>
            <button class="sheet active">Model</button>
            <button class="sheet">Motion Study 1</button>
        </div>
    </main>

    <footer class="status">
        <span>Select an entity</span>
        <span class="mode">Editing Part</span>
        <span class="cell"></span>
        <button aria-label="Tags"><svg class="icon"><use href="#i-tag"/></svg></button>
    </footer>
</body>
</html>
```

FILE: styles.css
```css
* {
    box-sizing: border-box;
}

body {
    margin: 0;
    height: 100vh;
    padding: 3px 8px 10px 9px;
    display: flex;
    flex-direction: column;
    background: #cc0099;
    font-family: "DejaVu Sans Condensed", "DejaVu Sans", sans-serif;
    font-size: 15px;
    color: #3a3a4c;
    overflow: hidden;
}

button {
    margin: 0;
    padding: 0;
    border: 0;
    background: none;
    font: inherit;
    color: inherit;
}

input {
    border: 0;
    background: none;
    outline: none;
    font: inherit;
    min-width: 0;
}

.defs {
    position: absolute;
    width: 0;
    height: 0;
}

.icon {
    width: 24px;
    height: 24px;
    flex: none;
    display: block;
}

.glyph {
    width: 22px;
    height: 22px;
    display: block;
}

.caret {
    width: 0;
    height: 0;
    flex: none;
    border: 4px solid transparent;
    border-top: 5px solid #3c3e4a;
    border-bottom: 0;
}

/* Title bar */
.titlebar {
    height: 42px;
    flex: none;
    display: flex;
    align-items: center;
    background: linear-gradient(#ecebf7, #d6d6e4 50%, #bcbecd);
    border-bottom: 2px solid #666874;
}

.brand {
    width: 194px;
    height: 100%;
    padding-left: 4px;
    display: flex;
    align-items: center;
    gap: 4px;
    border-right: 12px solid #7d80a0;
    background: linear-gradient(#dddde8, #b9bac8);
}

.cube {
    width: 30px;
    height: 30px;
}

.cube-text {
    font: bold 15px "Liberation Sans", sans-serif;
    fill: #fff;
}

.brand-name {
    font-family: Roboto, sans-serif;
    font-size: 26px;
    color: #44444e;
}

.brand-name b {
    color: #33333b;
}

.menu {
    height: 100%;
    width: 447px;
    padding: 2px 0 0 12px;
    display: flex;
    align-items: center;
    gap: 25px;
    background: linear-gradient(#e2e1ec, #bbbcca);
    border-right: 2px solid #6c6e7c;
    border-bottom-right-radius: 6px;
}

.menu .pin {
    margin-left: -6px;
}

.quick {
    display: flex;
    align-items: center;
    padding: 2px 0 0 7px;
}

.drop {
    width: 52px;
    display: flex;
    align-items: center;
    gap: 10px;
}

.drop.off .caret {
    border-top-color: #a2a4b0;
}

.select-tool {
    width: 50px;
    height: 32px;
    display: flex;
    align-items: center;
    gap: 9px;
    padding-left: 2px;
    border: 2px solid #73758c;
    border-radius: 5px;
    background: linear-gradient(90deg, #b6b6d0 29px, #73758c 29px, #73758c 30px, #dcdce8 30px);
}

.rebuild {
    width: 37px;
    padding-left: 5px;
}

.doc-title {
    flex: 1;
    padding: 2px 8px 0 0;
    text-align: center;
}

.search {
    width: 286px;
    height: 29px;
    display: flex;
    align-items: center;
    border: 2px solid #84869a;
    border-radius: 14px;
    background: linear-gradient(#d0d2dc, #eef0f6);
    color: #22222a;
}

.search .lens {
    width: 28px;
    height: 32px;
    flex: none;
}

.search input {
    flex: 1;
    padding: 0 3px;
}

.search input::placeholder {
    color: #22222a;
    opacity: 1;
}

.window-controls {
    width: 158px;
    display: flex;
    align-items: center;
    gap: 11px;
    padding-left: 12px;
    color: #82848f;
}

.window-controls .help {
    display: flex;
    align-items: center;
    gap: 15px;
    margin-right: 2px;
    font: bold 22px "Liberation Sans", sans-serif;
}

/* Ribbon */
.ribbon {
    position: relative;
    height: 108px;
    flex: none;
    display: flex;
    align-items: flex-start;
    background: linear-gradient(#fdffff, #f2f3fb 45%, #d4d5e2);
    border-bottom: 2px solid #5f616e;
}

.group {
    height: 100%;
    display: flex;
    padding-left: 6px;
    border-right: 1px solid #c6c7d4;
}

.group.tight {
    padding-left: 0;
}

.big {
    height: 98px;
    margin-top: 3px;
    padding-top: 16px;
    display: flex;
    flex-direction: column;
    align-items: center;
    text-align: center;
    line-height: 19px;
}

.big .icon {
    margin-bottom: 2px;
}

.big.menu-btn {
    padding-top: 6px;
}

.menu-btn .caret {
    margin-top: auto;
    margin-bottom: 7px;
}

.w-boss {
    width: 87px;
}

.w-cut {
    width: 71px;
}

.w-fillet {
    width: 52px;
}

.w-linear {
    width: 61px;
}

.w-ref {
    width: 90px;
}

.w-curves {
    width: 63px;
}

.stack {
    display: flex;
    flex-direction: column;
    padding: 4px 0 0 7px;
}

.stack button {
    height: 33px;
    display: flex;
    align-items: center;
    gap: 8px;
    white-space: nowrap;
}

.boss-stack {
    width: 193px;
    padding-left: 3px;
}

.cut-stack {
    width: 151px;
}

.rib-stack {
    width: 87px;
}

.wrap-stack {
    width: 96px;
}

.pressed {
    width: 84px;
    margin-left: 4px;
    padding-top: 14px;
    border: 2px solid #74768e;
    border-radius: 6px;
    background: linear-gradient(#b9b9d6, #c4c4e0);
    color: #29296a;
}

.watermark {
    position: absolute;
    right: 13px;
    top: 0;
    width: 100px;
    height: 104px;
    fill: #cfd2de;
    opacity: .6;
}

/* Workspace */
.workspace {
    flex: 1;
    min-height: 0;
    display: grid;
    grid-template-columns: 280px 1fr 7px;
    grid-template-rows: 1fr 23px;
    background: #c6c8d4;
}

.side {
    display: flex;
    flex-direction: column;
    min-height: 0;
}

.cmd-tabs {
    position: relative;
    z-index: 2;
    width: max-content;
    height: 28px;
    display: flex;
    align-items: flex-start;
    font-family: "Liberation Sans", sans-serif;
    font-size: 18px;
    color: #62646f;
}

.cmd-tabs button {
    height: 26px;
    padding: 0 9px;
    border: 2px solid #62646f;
    border-left: 0;
    border-top: 0;
    background: #bdbfcf;
}

.cmd-tabs button:nth-child(2) {
    padding: 0 13px;
}

.cmd-tabs .active {
    height: 28px;
    padding: 0 8px 2px 10px;
    background: #eeeef8;
    font-weight: bold;
    color: #33343c;
}

.panel {
    flex: 1;
    min-height: 0;
    display: flex;
    flex-direction: column;
    background: #e2e5ea;
    border-right: 4px solid #666875;
    font-family: "Noto Sans", sans-serif;
    font-size: 16px;
    color: #3c3c40;
}

.panel-tabs {
    height: 43px;
    flex: none;
    display: flex;
    align-items: flex-end;
    gap: 2px;
    background: linear-gradient(#c6c8d4 4px, #74768a 4px, #74768a 6px, #d9d8ec 6px);
    border-bottom: 1px solid #8e90a2;
}

.panel-tabs button {
    width: 38px;
    height: 31px;
    display: flex;
    align-items: center;
    justify-content: center;
    border: 1px solid #8587a0;
    border-bottom: 0;
    border-radius: 5px 5px 0 0;
    background: linear-gradient(#b6b8ca, #c8cadb);
}

.panel-tabs .active {
    border-color: #d0d2e0;
    background: #eceef6;
}

.panel-tabs .more {
    width: 20px;
    margin-left: auto;
    margin-right: 3px;
    border: 0;
    background: none;
}

.more svg {
    width: 14px;
    height: 12px;
    fill: none;
    stroke: #4c4e5c;
    stroke-width: 2;
}

.filter {
    height: 24px;
    margin: 3px 1px 4px 2px;
    flex: none;
    display: flex;
    align-items: center;
    padding-left: 9px;
    border: 2px solid #84869c;
    border-radius: 12px;
    background: linear-gradient(#d8d8ea, #fff);
}

.filter svg {
    width: 17px;
    height: 18px;
}

.root {
    height: 28px;
    flex: none;
    display: flex;
    align-items: center;
    gap: 7px;
    padding-left: 2px;
    white-space: nowrap;
    overflow: hidden;
    background: #e5e7ee;
}

.tree {
    position: relative;
    margin: 0;
    padding: 0 0 1px;
    list-style: none;
    background: #e5e7ee;
}

.tree::before {
    content: "";
    position: absolute;
    left: 15px;
    top: 0;
    bottom: 14px;
    border-left: 1px dotted #8c8e98;
}

.tree li {
    position: relative;
    height: 26px;
    display: flex;
    align-items: center;
    gap: 8px;
    padding-left: 30px;
}

.tree .icon {
    width: 23px;
    height: 23px;
}

.tree li::before {
    content: "";
    position: absolute;
    left: 16px;
    top: 13px;
    width: 13px;
    border-top: 1px dotted #8c8e98;
}

.tree .closed::after {
    content: "";
    position: absolute;
    left: 9px;
    top: 8px;
    width: 13px;
    height: 13px;
    border: 1px solid #8a8c96;
    background:
        linear-gradient(#444, #444) center / 7px 1px no-repeat,
        linear-gradient(#444, #444) center / 1px 7px no-repeat,
        #f4f4f8;
}

.icon-serif {
    font: bold 17px "Liberation Serif", serif;
    fill: #2430a0;
}

.icon-sans {
    font: bold 10px "Liberation Sans", sans-serif;
    fill: #b02828;
}

.rollback {
    height: 3px;
    flex: none;
    background: #3f6fc4;
}

.scrollbar {
    height: 28px;
    margin-top: auto;
    flex: none;
    display: flex;
    align-items: center;
    justify-content: space-between;
    padding: 0 6px;
    background: #f0f0ef;
    border-bottom: 5px solid #d6d7e0;
}

.scrollbar button {
    border: 5px solid transparent;
}

.scrollbar .left {
    border-left: 0;
    border-right-color: #333;
}

.scrollbar .right {
    border-right: 0;
    border-left-color: #333;
}

.thumb {
    width: 96px;
    height: 21px;
    margin-left: 14px;
    margin-right: auto;
    display: flex;
    align-items: center;
    justify-content: center;
    gap: 2px;
    border: 1px solid #96969a;
    background: linear-gradient(#f6f6f6, #d2d2d6);
}

.thumb i {
    width: 2px;
    height: 9px;
    background: #6c6c72;
}

/* Graphics area */
.viewport {
    position: relative;
    min-width: 0;
    min-height: 0;
}

.scene {
    position: absolute;
    width: 100%;
    height: 100%;
}

.edge {
    stroke: #1c1c26;
    stroke-width: 2;
}

.seam {
    stroke: #14141c;
    stroke-width: 3;
}

.plane {
    fill: none;
    stroke: #3c34e4;
    stroke-width: 2;
}

.plane-label {
    font: 26px "Liberation Sans", sans-serif;
    fill: #3c34e4;
}

.triad path {
    stroke-width: 6;
}

.triad text {
    font: 15px "Liberation Sans", sans-serif;
}

.hud {
    position: absolute;
    top: 7px;
    left: 0;
    right: 7px;
    display: flex;
    justify-content: center;
    gap: 10px;
}

.hud button {
    display: flex;
    align-items: center;
    gap: 5px;
}

.hud .caret {
    border-top-color: #666874;
}

.doc-controls {
    position: absolute;
    top: 10px;
    right: 12px;
    display: flex;
    gap: 12px;
    color: #4c4e58;
}

.splitter {
    position: absolute;
    left: 0;
    top: 639px;
    width: 11px;
    height: 42px;
    display: flex;
    flex-direction: column;
    align-items: center;
    justify-content: space-around;
    border: 1px solid #6c6e7c;
    border-left: 0;
    border-radius: 0 4px 4px 0;
    background: #dcdde8;
}

.splitter i {
    border: 3px solid transparent;
    border-left: 0;
    border-right: 4px solid #4a4c5a;
}

.strip {
    position: relative;
    grid-row: 1 / 3;
    grid-column: 3;
    background: #777b84;
    border-left: 2px solid #2c2e38;
}

.task-pane {
    position: absolute;
    top: 86px;
    right: 0;
    display: flex;
    flex-direction: column;
    gap: 1px;
}

.task-pane button {
    width: 34px;
    height: 34px;
    padding-left: 4px;
    border: 2px solid #84879c;
    border-right: 0;
    border-radius: 5px 0 0 5px;
    background: #bfc1d2;
}

.task-pane .active {
    background: #f0f0fa;
}

/* Model / motion tabs */
.sheet-tabs {
    grid-column: 1 / 3;
    display: flex;
    align-items: flex-start;
    border-top: 2px solid #2e3039;
    border-bottom: 1px solid #62646f;
    background: #e1e3ef;
    font-family: "Liberation Sans", sans-serif;
    font-size: 17px;
    color: #30313a;
}

.pager {
    width: 98px;
    height: 20px;
    display: flex;
    padding: 1px 2px;
    background: #b9bbcb;
}

.pager button {
    width: 24px;
    height: 18px;
    display: flex;
    align-items: center;
    justify-content: center;
    border: 1px solid #9496a8;
}

.pager svg {
    width: 12px;
    height: 12px;
    fill: #8a8c9e;
}

.sheet {
    height: 19px;
    padding: 0 21px 0 12px;
    line-height: 17px;
    border: solid #555764;
    border-width: 0 2px 2px 0;
    background: #c2c4d4;
}

.sheet.active {
    height: 20px;
    padding: 0 14px;
    border-left-width: 2px;
    background: #dfe2f2;
    font-weight: bold;
}

/* Status bar */
.status {
    height: 30px;
    flex: none;
    display: flex;
    align-items: center;
    padding-left: 3px;
    background: linear-gradient(#d6d8e4, #b8bac9);
    border-bottom: 2px solid #858794;
    font-family: "Noto Sans", sans-serif;
    font-size: 16px;
    color: #2e2f38;
}

.mode {
    margin-left: auto;
    padding: 0 8px;
    border: solid #dcdde6;
    border-width: 0 1px;
}

.cell {
    width: 24px;
    height: 18px;
    margin-right: 108px;
    border-right: 1px solid #dcdde6;
}

.status button {
    margin-right: 19px;
}
```
